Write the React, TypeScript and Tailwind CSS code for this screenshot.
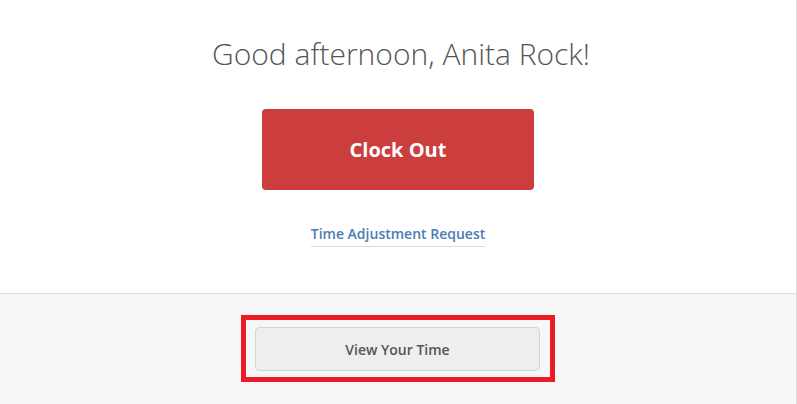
export default function App() {
  return (
    <div
      className="flex h-[404px] w-[797px] flex-col border-r border-[#dcdcdc] bg-white"
      style={{ fontFamily: '"Open Sans", sans-serif' }}
    >
      <div className="flex h-[294px] flex-col items-center border-b border-[#dedede]">
        <h1 className="mt-[33px] ml-[6px] text-[30px] font-light leading-[42px] text-[#555]">
          Good afternoon, Anita Rock!
        </h1>
        <button className="mt-[34px] flex h-[81px] w-[272px] items-center justify-center rounded-[4px] bg-[#cc3d3d] text-[20px] font-bold text-white">
          Clock Out
        </button>
        <a className="mt-[34px] border-b border-[#dadada] pb-[2px] text-[14px] font-semibold leading-[20px] text-[#4a7db6]">
          Time Adjustment Request
        </a>
      </div>
      <div className="flex flex-1 justify-center bg-[#f7f7f7] pt-[21px]">
        <div className="h-[67px] w-[314px] border-[5px] border-[#ed1c24] pl-[9px] pr-[10px] pt-[7px]">
          <button className="flex h-[44px] w-full items-center justify-center rounded-[4px] border border-[#d6d6d6] bg-[#eeeeee] text-[14px] font-semibold text-[#555]">
            View Your Time
          </button>
        </div>
      </div>
    </div>
  );
}
